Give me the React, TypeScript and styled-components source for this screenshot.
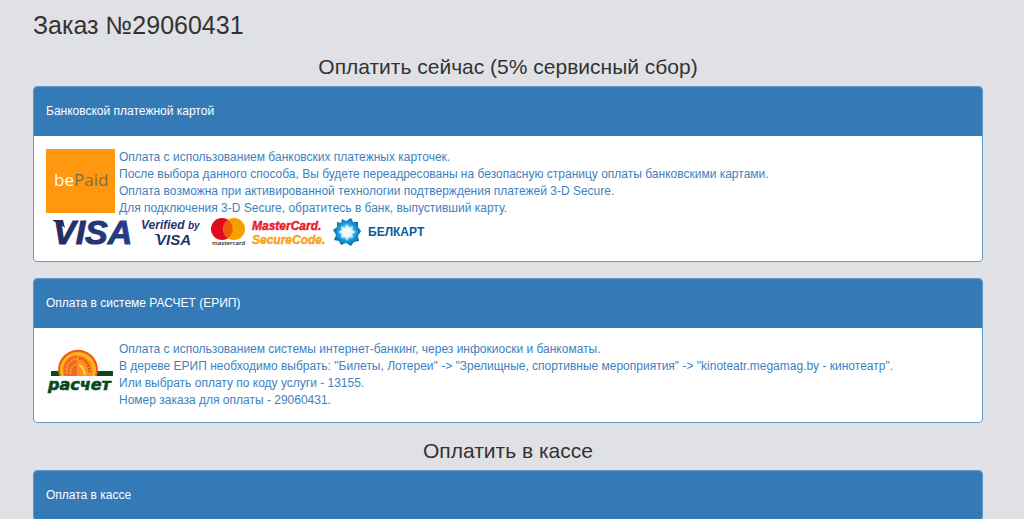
import React from "react";
import styled, { createGlobalStyle } from "styled-components";

const GlobalStyle = createGlobalStyle`
  * { box-sizing: border-box; }
  body {
    margin: 0;
    background: #e0e1e5;
    color: #333;
    font: 12px/17px "Liberation Sans", Arial, sans-serif;
  }
`;

const Page = styled.main`
  padding: 9px 41px 0 33px;
  height: 100vh;
  overflow: hidden;
`;

const Title = styled.h1`
  margin: 0 0 14px;
  font-size: 25px;
  line-height: 32px;
  font-weight: 400;
`;

const SectionTitle = styled.h2`
  margin: 0;
  padding-bottom: 8px;
  font-size: 21px;
  line-height: 23px;
  font-weight: 400;
  text-align: center;
`;

const Panel = styled.section`
  margin-bottom: 16px;
  border: 1px solid #5f9aca;
  border-radius: 4px;
  background: #fff;
  overflow: hidden;
`;

const PanelHeading = styled.h3`
  margin: 0;
  padding: 16px 12px;
  background: #337ab7;
  color: #fff;
  font-size: 12px;
  line-height: 17px;
  font-weight: 400;
`;

const PaymentLink = styled.a`
  display: block;
  padding: 13px 12px;
  color: #3d82bf;
  text-decoration: none;
`;

const Method = styled.div`
  display: flex;
  gap: 4px;
`;

const Picture = styled.svg`
  display: block;
  flex: none;
  overflow: visible;
`;

const Lines = styled.div`
  white-space: pre-line;
`;

const humanist = '"Open Sans", sans-serif';
const grotesque = '"Liberation Sans", Arial, sans-serif';

function BePaidLogo() {
  return (
    <Picture width="69" height="64" viewBox="0 0 69 64" role="img" aria-label="bePaid">
      <rect width="69" height="64" fill="#ff980f" />
      <text x="8" y="37" fontFamily={humanist} fontSize="17" fill="#7b6a58">
        <tspan fill="#fff">be</tspan>Paid
      </text>
    </Picture>
  );
}

function CardLogos() {
  return (
    <Picture width="384" height="31" viewBox="0 0 384 31" role="img" aria-label="Visa, MasterCard, Белкарт">
      <defs>
        <linearGradient id="visa" x1="0" x2="1">
          <stop offset="0" stopColor="#26295c" />
          <stop offset="1" stopColor="#243f8c" />
        </linearGradient>
        <radialGradient id="star">
          <stop offset="0" stopColor="#fff" />
          <stop offset=".28" stopColor="#b9e7fa" />
          <stop offset=".6" stopColor="#1f9fdb" />
          <stop offset="1" stopColor="#006bb0" />
        </radialGradient>
      </defs>
      <path fill="#26295c" d="M7 3h10l2 8Q14 6 7 4Z" />
      <text x="7" y="27" fontFamily={grotesque} fontSize="34" fontWeight="700" fontStyle="italic" fill="url(#visa)" stroke="url(#visa)">VISA</text>
      <g fill="#29326c" fontFamily={grotesque} fontWeight="700" fontStyle="italic">
        <text x="95" y="12" fontSize="12">Verified</text>
        <text x="142" y="12" fontSize="10">by</text>
      </g>
      <path fill="#26316b" d="M108 17h5l1 4q-2-3-6-4Z" />
      <text x="110" y="28" fontFamily={grotesque} fontSize="15" fontWeight="700" fontStyle="italic" fill="#26316b">VISA</text>
      <circle cx="176" cy="12" r="11" fill="#df0a20" />
      <circle cx="188" cy="12" r="11" fill="#f6a000" />
      <path d="M182 3a11 11 0 0 1 0 18a11 11 0 0 1 0-18Z" fill="#ea5b0c" />
      <text x="166" y="28" fontFamily={humanist} fontSize="6" fontWeight="600" fill="#222">mastercard</text>
      <g fontFamily={grotesque} fontSize="12" fontWeight="700" fontStyle="italic">
        <text x="206" y="13" fill="#e51c2c" stroke="#e51c2c" strokeWidth=".4">MasterCard.</text>
        <text x="206" y="27" fill="#f9a11b" stroke="#f9a11b" strokeWidth=".4">SecureCode.</text>
      </g>
      <g transform="translate(301 15)">
        <path fill="url(#star)" d="M-5-13-1-11 4-14 6-10 11-10 11-5 14-1 11 4 12 9 7 10 4 14-1 11-6 13-8 9-13 8-11 3-14-2-10-5-10-10-6-9Z" />
        <path fill="#fff" d="m0-8 2 4 4-2-1 4 4 2-4 2 1 4-4-1-2 4-2-4-4 1 1-4-4-2 4-2-1-4 4 2Z" opacity=".75" />
      </g>
      <text x="322" y="19" fontFamily={grotesque} fontSize="12" fontWeight="700" fill="#075b9f">БЕЛКАРТ</text>
    </Picture>
  );
}

function RaschetLogo() {
  return (
    <Picture width="69" height="64" viewBox="0 0 69 64" role="img" aria-label="Расчет">
      <path d="M5 30h62v5H5Z" fill="#064a20" />
      <path d="M13 35a20 20 0 1 1 38 0Z" fill="#ef5b16" />
      <path d="M15 35a18 18 0 1 1 34 0Z" fill="#ffb31c" />
      <path d="M18 35a15 15 0 1 1 28 0Z" fill="#ff9118" />
      <path d="M31 14v21H18C15 23 21 15 31 14Z" fill="#f46b27" />
      <path d="M21 32a11 11 0 0 1 10-14M25 33a8 8 0 0 1 6-10" fill="none" stroke="#ffc235" strokeWidth="1" strokeDasharray="2 1" />
      <path d="M33 17q9 1 11 14" fill="none" stroke="#dd5516" strokeWidth="3" strokeDasharray="2 1" />
      <path d="M33 24q5 2 6 10" fill="none" stroke="#ffd24e" strokeWidth="2" />
      <text x="2" y="49" fontFamily='"DejaVu Sans", sans-serif' fontSize="16" fontWeight="700" fontStyle="italic" fill="#064a20" stroke="#064a20" strokeWidth=".6">расчет</text>
    </Picture>
  );
}

export default function App() {
  return (
    <>
      <GlobalStyle />
      <Page>
        <Title>Заказ №29060431</Title>
        <SectionTitle>Оплатить сейчас (5% сервисный сбор)</SectionTitle>
        <Panel>
          <PanelHeading>Банковской платежной картой</PanelHeading>
          <PaymentLink href="#card">
            <Method>
              <BePaidLogo />
              <Lines>{`Оплата с использованием банковских платежных карточек.
После выбора данного способа, Вы будете переадресованы на безопасную страницу оплаты банковскими картами.
Оплата возможна при активированной технологии подтверждения платежей 3-D Secure.
Для подключения 3-D Secure, обратитесь в банк, выпустивший карту.`}</Lines>
            </Method>
            <CardLogos />
          </PaymentLink>
        </Panel>
        <Panel>
          <PanelHeading>Оплата в системе РАСЧЕТ (ЕРИП)</PanelHeading>
          <PaymentLink href="#erip">
            <Method>
              <RaschetLogo />
              <Lines>{`Оплата с использованием системы интернет-банкинг, через инфокиоски и банкоматы.
В дереве ЕРИП необходимо выбрать: "Билеты, Лотереи" -> "Зрелищные, спортивные мероприятия" -> "kinoteatr.megamag.by - кинотеатр".
Или выбрать оплату по коду услуги - 13155.
Номер заказа для оплаты - 29060431.`}</Lines>
            </Method>
          </PaymentLink>
        </Panel>
        <SectionTitle>Оплатить в кассе</SectionTitle>
        <Panel>
          <PanelHeading>Оплата в кассе</PanelHeading>
        </Panel>
      </Page>
    </>
  );
}
